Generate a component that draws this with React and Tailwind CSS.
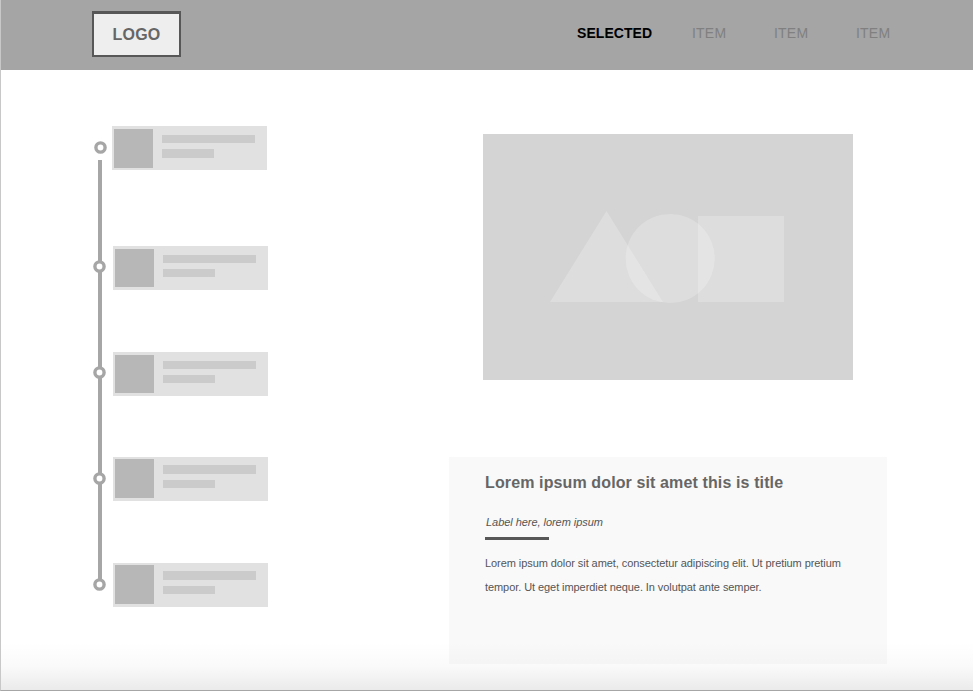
const ENTRIES = [
  { row: "pl-[93px] gap-[5px]", dot: "mt-[15px]", thumb: "mt-[3px] h-[39px]", bars: "mt-[9px]", a: "h-2", gap: "mt-[6px]", b: "h-[9px]" },
  { row: "mt-[76px] pl-[92px] gap-[7px]", dot: "mt-[14px]", thumb: "mt-[3px] h-[38px]", bars: "mt-[9px]", a: "h-2", gap: "mt-[6px]", b: "h-2" },
  { row: "mt-[62px] pl-[92px] gap-[7px]", dot: "mt-[14px]", thumb: "mt-[3px] h-[38px]", bars: "mt-[9px]", a: "h-2", gap: "mt-[6px]", b: "h-2" },
  { row: "mt-[61px] pl-[92px] gap-[7px]", dot: "mt-[15px]", thumb: "mt-[2px] h-[39px]", bars: "mt-[8px]", a: "h-[9px]", gap: "mt-[6px]", b: "h-2" },
  { row: "mt-[62px] pl-[92px] gap-[7px]", dot: "mt-[15px]", thumb: "mt-[2px] h-[39px]", bars: "mt-[8px]", a: "h-[9px]", gap: "mt-[6px]", b: "h-2" },
];

function TimelineEntry({ entry }) {
  return (
    <li className={`relative flex items-start ${entry.row}`}>
      <svg className={`size-[13px] shrink-0 ${entry.dot}`} viewBox="0 0 13 13">
        <circle cx="6.5" cy="6.5" r="4.6" fill="#ffffff" stroke="#a6a6a6" strokeWidth="3.4" />
      </svg>
      <div className="flex h-11 w-[155px] items-start bg-[#e1e1e1] pl-[2px]">
        <div className={`w-[39px] bg-[#b7b7b7] ${entry.thumb}`} />
        <div className={`ml-[9px] ${entry.bars}`}>
          <div className={`w-[93px] bg-[#cbcbcb] ${entry.a}`} />
          <div className={`w-[52px] bg-[#cbcbcb] ${entry.gap} ${entry.b}`} />
        </div>
      </div>
    </li>
  );
}

function Header() {
  return (
    <header className="flex h-[70px] items-start bg-[#a5a5a5] pl-[91px]">
      <div className="mt-[11px] flex h-[46px] w-[89px] items-center justify-center border-2 border-t-[3px] border-[#575757] bg-[#eeeeee] text-base font-bold tracking-[0.2px] text-[#666666]">
        LOGO
      </div>
      <nav className="mt-[23px] ml-[396px] flex text-sm leading-5 whitespace-nowrap text-[#808080]">
        <a className="w-[115px] font-bold tracking-[0.05px] text-black">SELECTED</a>
        <a className="w-[82px] tracking-[0.2px]">ITEM</a>
        <a className="w-[82px] tracking-[0.2px]">ITEM</a>
        <a className="tracking-[0.2px]">ITEM</a>
      </nav>
    </header>
  );
}

function ImagePlaceholder() {
  return (
    <div className="ml-[34px] h-[246px] w-[370px] bg-[#d4d4d4]">
      <svg width="370" height="246" viewBox="0 0 370 246" fill="#ffffff" fillOpacity="0.21">
        <path d="M123.5 77 180 168H67Z" />
        <circle cx="187.2" cy="124.5" r="44.6" />
        <rect x="215" y="82" width="86" height="86" />
      </svg>
    </div>
  );
}

export default function App() {
  return (
    <div className="relative h-[691px] w-[973px] overflow-hidden border-b border-l border-b-[#a6a6a6] border-l-[#c8c8c8] bg-white font-['Liberation_Sans',Arial,sans-serif]">
      <Header />
      <main className="flex">
        <ul className="relative w-[448px] pt-14">
          <li aria-hidden="true" className="absolute top-[90px] left-[97px] h-[420px] w-1 bg-[#a6a6a6]" />
          {ENTRIES.map((entry, i) => (
            <TimelineEntry key={i} entry={entry} />
          ))}
        </ul>
        <section className="pt-16">
          <ImagePlaceholder />
          <article className="mt-[77px] h-[207px] w-[438px] bg-[#f9f9f9] pt-[14px] pl-[36px] text-[11px] text-[#555555]">
            <h1 className="text-base leading-6 font-bold tracking-[0.12px] whitespace-nowrap text-[#666666]">
              Lorem ipsum dolor sit amet this is title
            </h1>
            <p className="mt-[19px] pl-px leading-4 tracking-[-0.05px] whitespace-nowrap italic">Label here, lorem ipsum</p>
            <div className="mt-[7px] h-[3px] w-16 bg-[#575757]" />
            <p className="mt-[11px] leading-6 tracking-[-0.073px] whitespace-nowrap">
              Lorem ipsum dolor sit amet, consectetur adipiscing elit. Ut pretium pretium
              <br />
              tempor. Ut eget imperdiet neque. In volutpat ante semper.
            </p>
          </article>
        </section>
      </main>
      <div className="pointer-events-none absolute inset-x-0 bottom-0 h-12 bg-linear-to-b from-transparent via-black/[0.02] to-black/[0.08]" />
    </div>
  );
}
